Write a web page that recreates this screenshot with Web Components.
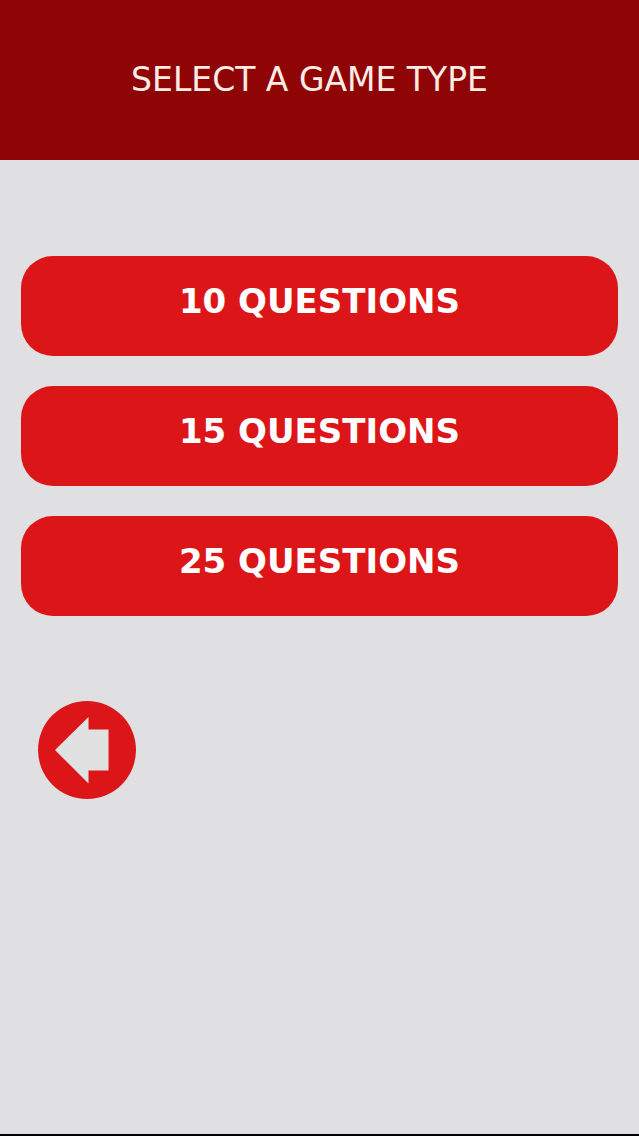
<!DOCTYPE html>
<html lang="en">
<head>
<meta charset="utf-8">
<meta name="viewport" content="width=device-width, initial-scale=1">
<title>Select a game type</title>
<style>
html, body {
  margin: 0;
}
body {
  font-family: "DejaVu Sans", Verdana, sans-serif;
  background-color: #e0dfe1;
}
</style>
</head>
<body>
<quiz-screen>
  <screen-header slot="header">SELECT A GAME TYPE</screen-header>
  <game-option>10 QUESTIONS</game-option>
  <game-option>15 QUESTIONS</game-option>
  <game-option>25 QUESTIONS</game-option>
  <back-button slot="footer"></back-button>
</quiz-screen>

<script>
const screenTemplate = document.createElement("template")
screenTemplate.innerHTML = `
<style>
:host{
  display: flex;
  flex-direction: column;
  box-sizing: border-box;
  min-height: 100vh;
  border-bottom: 2px solid #000;
}
main{
  display: flex;
  flex-direction: column;
  gap: 30px;
  padding: 96px 21px 0;
}
nav{
  display: flex;
  padding: 85px 38px 40px;
}
</style>

<slot name="header"></slot>
<main><slot></slot></main>
<nav><slot name="footer"></slot></nav>
`

class QuizScreen extends HTMLElement {
    constructor() {
        super()
        this.attachShadow({ mode: "open" })
        this.shadowRoot.appendChild(screenTemplate.content.cloneNode(true))
    }
}
customElements.define("quiz-screen", QuizScreen)

const headerTemplate = document.createElement("template")
headerTemplate.innerHTML = `
<style>
:host{
  display: block;
  background-color: #8f0505;
  color: #fdece6;
}
h1{
  margin: 0;
  padding: 60px 20px 60px 0;
  font-size: 33px;
  line-height: 40px;
  font-weight: 400;
  text-align: center;
}
</style>

<h1><slot></slot></h1>
`

class ScreenHeader extends HTMLElement {
    constructor() {
        super()
        this.attachShadow({ mode: "open" })
        this.shadowRoot.appendChild(headerTemplate.content.cloneNode(true))
    }
}
customElements.define("screen-header", ScreenHeader)

const optionTemplate = document.createElement("template")
optionTemplate.innerHTML = `
<style>
:host{
  display: block;
}
button{
  display: block;
  width: 100%;
  margin: 0;
  padding: 25px 20px 35px;
  border: none;
  border-radius: 32px;
  background-color: #dc1618;
  color: #fff;
  font-family: inherit;
  font-size: 34px;
  line-height: 40px;
  font-weight: 700;
  text-align: center;
  cursor: pointer;
}
button:hover{
  background-color: #c51214;
}
</style>

<button type="button"><slot></slot></button>
`

class GameOption extends HTMLElement {
    constructor() {
        super()
        this.attachShadow({ mode: "open" })
        this.shadowRoot.appendChild(optionTemplate.content.cloneNode(true))
    }
}
customElements.define("game-option", GameOption)

const backTemplate = document.createElement("template")
backTemplate.innerHTML = `
<style>
:host{
  display: block;
}
button{
  display: block;
  padding: 0;
  border: none;
  border-radius: 50%;
  background: none;
  cursor: pointer;
}
svg{
  display: block;
  width: 98px;
  height: 98px;
}
</style>

<button type="button" aria-label="Back">
  <svg viewBox="0 0 98 98" aria-hidden="true">
    <circle cx="49" cy="49" r="49" fill="#dc1618"/>
    <path fill="#e2e1e2" d="M17 49L50.500 16v12.500H70.500v41H50.500v13Z"/>
  </svg>
</button>
`

class BackButton extends HTMLElement {
    constructor() {
        super()
        this.attachShadow({ mode: "open" })
        this.shadowRoot.appendChild(backTemplate.content.cloneNode(true))
    }
    connectedCallback() {
        this.shadowRoot.querySelector("button").addEventListener("click", () => {
            history.back()
        })
    }
}
customElements.define("back-button", BackButton)
</script>
</body>
</html>
